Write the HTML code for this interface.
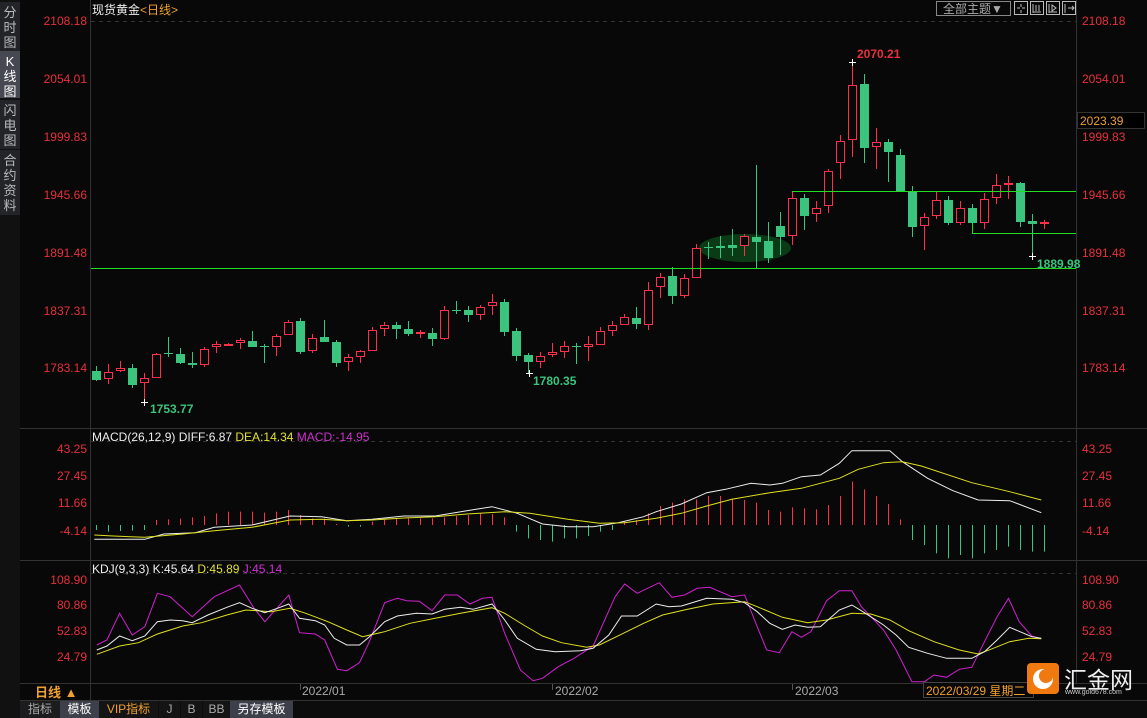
<!DOCTYPE html>
<html><head><meta charset="utf-8"><style>
body{margin:0;background:#080808;width:1147px;height:718px;overflow:hidden;font-family:"Liberation Sans","Noto Sans CJK SC",sans-serif;}
#side{position:absolute;left:0;top:0;width:20px;height:718px;background:#111;}
.tab{position:absolute;left:0;width:20px;background:#232428;color:#bbb;font-size:13px;line-height:15px;text-align:center;}
svg{position:absolute;left:0;top:0}
</style></head><body>
<div id="side">
<div class="tab" style="top:2px;height:47px;padding-top:3px">分<br>时<br>图</div>
<div class="tab" style="top:51px;height:44px;padding-top:3px;background:#464852;color:#fff">K<br>线<br>图</div>
<div class="tab" style="top:100px;height:46px;padding-top:3px">闪<br>电<br>图</div>
<div class="tab" style="top:150px;height:62px;padding-top:3px">合<br>约<br>资<br>料</div>
</div>
<svg id="s" width="1147" height="718" xmlns="http://www.w3.org/2000/svg" font-family="Liberation Sans, Noto Sans CJK SC, sans-serif">
<g stroke="#333" stroke-width="1" fill="none">
<line x1="90.5" y1="0" x2="90.5" y2="700"/>
<line x1="1076.5" y1="0" x2="1076.5" y2="683"/>
<line x1="20" y1="428.5" x2="1147" y2="428.5"/>
<line x1="20" y1="560.5" x2="1147" y2="560.5"/>
<line x1="20" y1="683.5" x2="1147" y2="683.5"/>
<line x1="20" y1="700.5" x2="1147" y2="700.5"/>
<line x1="91" y1="21.5" x2="1076" y2="21.5" stroke-dasharray="4,4"/>
<line x1="91" y1="441.5" x2="1076" y2="441.5" stroke-dasharray="4,4"/>
<line x1="91" y1="573.5" x2="1076" y2="573.5" stroke-dasharray="4,4"/>
</g>
<text x="92" y="14" font-size="12" fill="#eee">现货黄金<tspan fill="#f0a030">&lt;日线&gt;</tspan></text>
<rect x="936.5" y="1.5" width="74" height="14" fill="none" stroke="#888"/>
<text x="943" y="13" font-size="12" fill="#aaa">全部主题▼</text>
<g fill="none" stroke="#bbb"><rect x="1014.5" y="1.5" width="13" height="13"/><rect x="1030.5" y="1.5" width="13" height="13"/><rect x="1046.5" y="1.5" width="13" height="13"/><rect x="1062.5" y="1.5" width="13" height="13"/>
<path d="M1021 4v3M1021 10v3M1017 8h3M1022 8h3M1033 4v9M1033 12h8M1036 5v6M1039 5v6M1049 4v9M1049 12h8M1052 5l4 3-4 3zM1065 4v9M1068 8h6M1072 6l2 2-2 2"/></g>
<g id="g"></g>
<g font-size="12" fill="#e8303c" text-anchor="end" id="la">
<text x="87" y="25">2108.18</text><text x="87" y="83">2054.01</text><text x="87" y="141">1999.83</text><text x="87" y="199">1945.66</text><text x="87" y="257">1891.48</text><text x="87" y="315">1837.31</text><text x="87" y="372">1783.14</text>
<text x="87" y="453">43.25</text><text x="87" y="480">27.45</text><text x="87" y="507">11.66</text><text x="87" y="535">-4.14</text>
<text x="87" y="584">108.90</text><text x="87" y="609">80.86</text><text x="87" y="635">52.83</text><text x="87" y="661">24.79</text>
</g>
<g font-size="12" fill="#e8303c">
<text x="1082" y="25">2108.18</text><text x="1082" y="83">2054.01</text><text x="1082" y="141">1999.83</text><text x="1082" y="199">1945.66</text><text x="1082" y="257">1891.48</text><text x="1082" y="315">1837.31</text><text x="1082" y="372">1783.14</text>
<text x="1082" y="453">43.25</text><text x="1082" y="480">27.45</text><text x="1082" y="507">11.66</text><text x="1082" y="535">-4.14</text>
<text x="1082" y="584">108.90</text><text x="1082" y="609">80.86</text><text x="1082" y="635">52.83</text><text x="1082" y="661">24.79</text>
</g>
<rect x="1077.5" y="112.5" width="67" height="16" fill="#000" stroke="#333"/>
<text x="1080" y="125" font-size="12" fill="#f0a030">2023.39</text>
<text x="92" y="441" font-size="12" fill="#eee">MACD(26,12,9) DIFF:6.87 <tspan fill="#e0e030">DEA:14.34</tspan> <tspan fill="#d030d0">MACD:-14.95</tspan></text>
<text x="92" y="573" font-size="12" fill="#eee">KDJ(9,3,3) K:45.64 <tspan fill="#e0e030">D:45.89</tspan> <tspan fill="#d030d0">J:45.14</tspan></text>
<g font-size="12" font-weight="bold">
<text x="857" y="58" fill="#e8303c">2070.21</text>
<text x="150" y="413" fill="#3ac47d">1753.77</text>
<text x="533" y="385" fill="#3ac47d">1780.35</text>
<text x="1037" y="268" fill="#3ac47d">1889.98</text>
</g>
<g font-size="12" fill="#aaa"><text x="302" y="695">2022/01</text><text x="555" y="695">2022/02</text><text x="795" y="695">2022/03</text></g>
<g stroke="#555"><line x1="300.5" y1="684" x2="300.5" y2="690"/><line x1="552.5" y1="684" x2="552.5" y2="690"/><line x1="792.5" y1="684" x2="792.5" y2="690"/></g>
<rect x="923.5" y="682.5" width="110" height="15" fill="#080808" stroke="#444"/>
<text x="926" y="695" font-size="12" fill="#f0a030">2022/03/29 星期二</text>
<text x="35" y="697" font-size="13" font-weight="bold" fill="#f0a030">日线 ▲</text>
<rect x="1027" y="663" width="32" height="31" rx="4" fill="#f07a10"/>
<circle cx="1043" cy="679" r="10" fill="#fff"/><circle cx="1046" cy="676" r="7" fill="#f07a10"/>
<text x="1064" y="688" font-size="23" fill="#eee" font-family="Noto Sans CJK SC, sans-serif">汇金网</text>
<text x="1065" y="694" font-size="7" fill="#ccc">www.gold678.com</text>
</svg>
<div style="position:absolute;left:20px;top:701px;width:1127px;height:17px;background:#0c0c0c;font-size:12px;line-height:17px;">
<span style="position:absolute;left:0;width:40px;text-align:center;color:#aaa;background:#1c1c1e">指标</span>
<span style="position:absolute;left:40px;width:39px;text-align:center;color:#fff;background:#3d404a">模板</span>
<span style="position:absolute;left:79px;width:59px;text-align:center;color:#f0a030;background:#141414">VIP指标</span>
<span style="position:absolute;left:139px;width:21px;text-align:center;color:#aaa;background:#141414">J</span>
<span style="position:absolute;left:161px;width:21px;text-align:center;color:#aaa;background:#141414">B</span>
<span style="position:absolute;left:183px;width:27px;text-align:center;color:#aaa;background:#141414">BB</span>
<span style="position:absolute;left:210px;width:63px;text-align:center;color:#fff;background:#3d404a">另存模板</span>
</div>
<script>
var NS="http://www.w3.org/2000/svg",g=document.getElementById('g');
function el(t,a){var e=document.createElementNS(NS,t);for(var k in a)e.setAttribute(k,a[k]);g.appendChild(e);return e;}
var R="#ff3048",G="#3ac47d";
el('ellipse',{cx:745,cy:248,rx:46,ry:14,fill:"#0b3a16"});
// x,top,bottom,high,low,up(1=red)
var C=[[96,371,380,366,381,0],[108,372,379,364,384,1],[120,368,371,361,372,1],[132,368,385,364,388,0],[144,378,383,373,402,1],[156,354,378,353,378,1],[168,353,354,337,357,0],[180,354,363,348,364,0],[192,363,365,352,368,0],[204,349,365,347,367,1],[216,344,347,341,353,1],[228,344,345,343,346,1],[240,340,343,338,349,1],[252,341,347,331,347,0],[264,346,347,344,363,0],[276,336,347,334,356,1],[288,322,335,320,335,1],[300,321,352,318,354,0],[312,338,351,334,353,1],[324,337,342,320,342,0],[336,342,363,340,367,0],[348,357,362,354,371,1],[360,351,357,350,363,1],[372,330,351,327,351,1],[384,325,329,322,336,1],[396,325,329,322,339,0],[408,329,334,321,336,0],[420,332,333,330,338,1],[432,333,339,328,346,0],[444,310,339,306,340,1],[456,310,311,301,314,0],[468,310,315,306,322,0],[480,307,315,305,320,1],[492,302,306,294,315,1],[504,302,332,299,336,0],[516,331,356,328,361,0],[528,355,362,353,373,0],[540,356,362,352,368,1],[552,352,355,343,357,1],[564,346,352,341,358,1],[576,346,347,343,364,0],[588,344,347,336,361,1],[600,331,345,327,345,1],[612,325,331,321,336,1],[624,317,325,314,325,1],[636,318,324,307,329,0],[648,290,325,282,330,1],[660,277,287,273,298,1],[672,276,296,267,304,0],[684,278,296,274,298,1],[696,248,278,244,278,1],[708,247,248,242,259,0],[720,246,248,236,258,0],[732,245,248,229,256,0],[744,236,246,234,256,1],[756,237,242,165,268,0],[768,241,258,222,263,0],[780,226,237,212,255,0],[792,198,236,191,245,1],[804,198,216,194,230,0],[816,208,214,201,222,1],[828,171,206,169,213,1],[840,141,163,135,179,1],[852,85,140,62,157,1],[864,84,148,74,163,0],[876,142,147,128,169,1],[888,142,152,139,182,0],[900,155,191,149,191,0],[912,192,227,186,237,0],[924,217,226,213,250,1],[936,200,216,192,219,1],[948,200,223,196,225,0],[960,208,223,201,225,1],[972,208,223,204,233,0],[984,199,223,193,229,1],[996,185,198,174,204,1],[1008,183,184,176,199,1],[1020,183,222,182,227,0],[1032,221,224,214,256,0],[1044,222,224,220,229,1]];
C.forEach(function(c){var col=c[5]?R:G;
el('line',{x1:c[0]+.5,x2:c[0]+.5,y1:c[3],y2:c[1],stroke:col});
el('line',{x1:c[0]+.5,x2:c[0]+.5,y1:c[2],y2:c[4],stroke:col});
var h=Math.max(1,c[2]-c[1]);
if(c[5])el('rect',{x:c[0]-3.5,y:c[1]+.5,width:8,height:Math.max(1,h-1),fill:"#080808",stroke:col});
else el('rect',{x:c[0]-4,y:c[1],width:9,height:h+ (h<2?0:0),fill:col});});
el('line',{x1:91,x2:1076,y1:268.5,y2:268.5,stroke:"#22dd22"});
el('line',{x1:792,x2:1076,y1:191.5,y2:191.5,stroke:"#22dd22"});
el('line',{x1:972,x2:1076,y1:233.5,y2:233.5,stroke:"#22dd22"});
el('line',{x1:972.5,x2:972.5,y1:223,y2:233,stroke:"#22dd22"});
[[852,62],[144,402],[529,373],[1032,256]].forEach(function(p){el('path',{d:"M"+(p[0]-3)+" "+(p[1]+.5)+"h7M"+(p[0]+.5)+" "+(p[1]-3)+"v7",stroke:"#fff"});});
var M=[300,305,303,302,300,270,268,266,262,258,250,245,245,245,248,245,240,255,265,265,282,290,290,275,270,265,265,265,265,262,258,255,250,252,262,305,325,330,335,325,325,318,305,300,275,270,250,228,218,208,208,198,198,205,210,218,240,245,232,235,238,225,198,155,178,198,222,268,330,345,370,385,375,385,370,360,350,360,365,365];
M.forEach(function(v,i){var x=96+12*i+.5,y=430+v/3;el('line',{x1:x,x2:x,y1:525,y2:y,stroke:v<285?R:G});});
function pl(pts,col,ox,oy){var d=[];for(var i=0;i<pts.length;i+=2)d.push((ox+pts[i]/1.584).toFixed(1)+","+(oy+pts[i+1]/3).toFixed(1));el('polyline',{points:d.join(" "),fill:"none",stroke:col,"stroke-width":1});}
pl([10,328,30,328,90,328,120,312,170,308,200,292,260,285,320,258,370,260,410,272,450,268,500,258,550,258,600,242,640,230,680,250,720,282,760,290,800,290,840,278,880,260,900,245,940,222,980,188,1010,178,1050,160,1080,165,1100,160,1130,140,1160,135,1190,100,1210,62,1270,62,1290,95,1330,145,1370,182,1410,210,1460,212,1510,248],"#eee",88,430);
pl([10,315,40,318,90,322,150,312,200,302,260,292,320,270,370,268,410,272,450,270,500,264,550,260,600,252,660,245,700,250,760,268,810,280,850,278,900,265,940,250,980,228,1020,208,1080,188,1130,175,1190,145,1220,118,1260,98,1290,95,1320,108,1400,158,1460,185,1510,210],"#e0e020",88,430);
pl([14,255,30,240,50,160,70,225,90,200,110,100,130,110,165,170,200,110,240,75,262,142,280,185,318,105,335,218,360,222,375,240,395,328,410,332,430,308,445,248,470,128,490,115,505,122,525,124,545,152,565,105,585,105,605,132,625,115,640,112,660,220,685,330,705,362,720,355,745,320,770,295,800,258,835,110,850,72,870,100,905,68,925,112,945,105,965,85,985,82,1020,110,1040,105,1060,200,1075,270,1095,278,1115,215,1130,232,1145,215,1170,122,1190,92,1210,92,1225,140,1260,210,1280,270,1305,365,1325,365,1340,345,1360,352,1380,328,1400,322,1420,245,1440,170,1458,115,1475,185,1495,228,1510,236],"#d020d0",88,560);
pl([14,283,50,258,80,248,110,222,150,198,180,188,220,165,250,150,290,155,320,145,345,160,380,185,410,210,435,230,470,215,510,190,550,175,590,160,640,143,660,160,690,195,720,228,750,248,790,262,810,255,850,218,880,190,910,165,950,148,990,132,1040,125,1060,140,1100,172,1140,188,1170,180,1210,160,1240,162,1270,180,1300,212,1340,245,1380,270,1410,282,1430,268,1460,245,1490,235,1510,236],"#e0e020",88,560);
pl([14,270,30,258,50,228,70,242,90,228,110,185,130,180,150,182,165,188,190,165,220,142,240,128,260,145,280,158,300,145,318,132,335,175,360,182,375,195,390,235,410,255,430,255,445,232,470,185,490,168,520,160,545,162,565,148,590,142,610,148,640,132,660,180,680,235,710,268,740,275,780,272,800,265,825,225,845,168,870,168,900,132,920,140,940,138,980,115,1020,118,1040,128,1060,155,1080,190,1100,208,1120,195,1140,202,1160,200,1190,150,1210,135,1230,158,1260,195,1280,225,1300,262,1330,280,1360,295,1400,295,1420,275,1440,240,1460,202,1480,218,1495,230,1510,235],"#eee",88,560);
</script>
</body></html>
